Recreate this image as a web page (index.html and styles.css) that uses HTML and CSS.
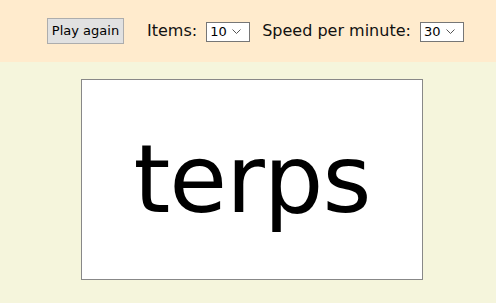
FILE: index.html
```html
<!DOCTYPE html>
<html lang="en">
<head>
    <meta charset="UTF-8">
    <title>Terps</title>
    <link rel="stylesheet" href="styles.css">
</head>
<body>
    <div class="controls">
        <button class="again">Play again</button>
        <label class="field">Items:
            <select>
                <option>10</option>
                <option>20</option>
            </select>
        </label>
        <label class="field">Speed per minute:
            <select>
                <option>30</option>
                <option>60</option>
            </select>
        </label>
    </div>
    <div class="stage">
        <div class="card">terps</div>
    </div>
</body>
</html>
```

FILE: styles.css
```css
html, body {
    margin: 0;
    height: 100%;
}
body {
    font-family: "DejaVu Sans", Verdana, sans-serif;
    background-color: #F5F5DC;
}
.controls {
    height: 62px;
    box-sizing: border-box;
    background-color: #FFEBCD;
    display: flex;
    align-items: center;
    padding-left: 47px;
    padding-bottom: 1px;
}
.again {
    font: 13px "DejaVu Sans", sans-serif;
    width: 77px;
    height: 26px;
    padding: 0;
    margin-right: 23px;
    background-color: #E1E1E1;
    border: 1px solid #ADADAD;
    color: black;
}
.field {
    font-size: 16px;
    color: #111;
    margin-right: 12px;
    display: flex;
    align-items: center;
    gap: 9px;
}
.field select {
    appearance: none;
    font: 13px "DejaVu Sans", sans-serif;
    width: 44px;
    height: 20px;
    padding: 0 0 0 3px;
    background: white url("data:image/svg+xml,%3Csvg xmlns='http://www.w3.org/2000/svg' width='9' height='6'%3E%3Cpath d='M.5.5 4.5 4.5 8.5.5' fill='none' stroke='%23555'/%3E%3C/svg%3E") no-repeat right 8px center;
    border: 1px solid #767676;
    border-radius: 0;
    margin-top: 2px;
    color: black;
}
.stage {
    padding-top: 17px;
    padding-left: 81px;
}
.card {
    width: 340px;
    height: 199px;
    background-color: white;
    border: 1px solid #888;
    display: flex;
    align-items: center;
    justify-content: center;
    font-size: 94px;
    line-height: 1;
    letter-spacing: -1px;
}
```
